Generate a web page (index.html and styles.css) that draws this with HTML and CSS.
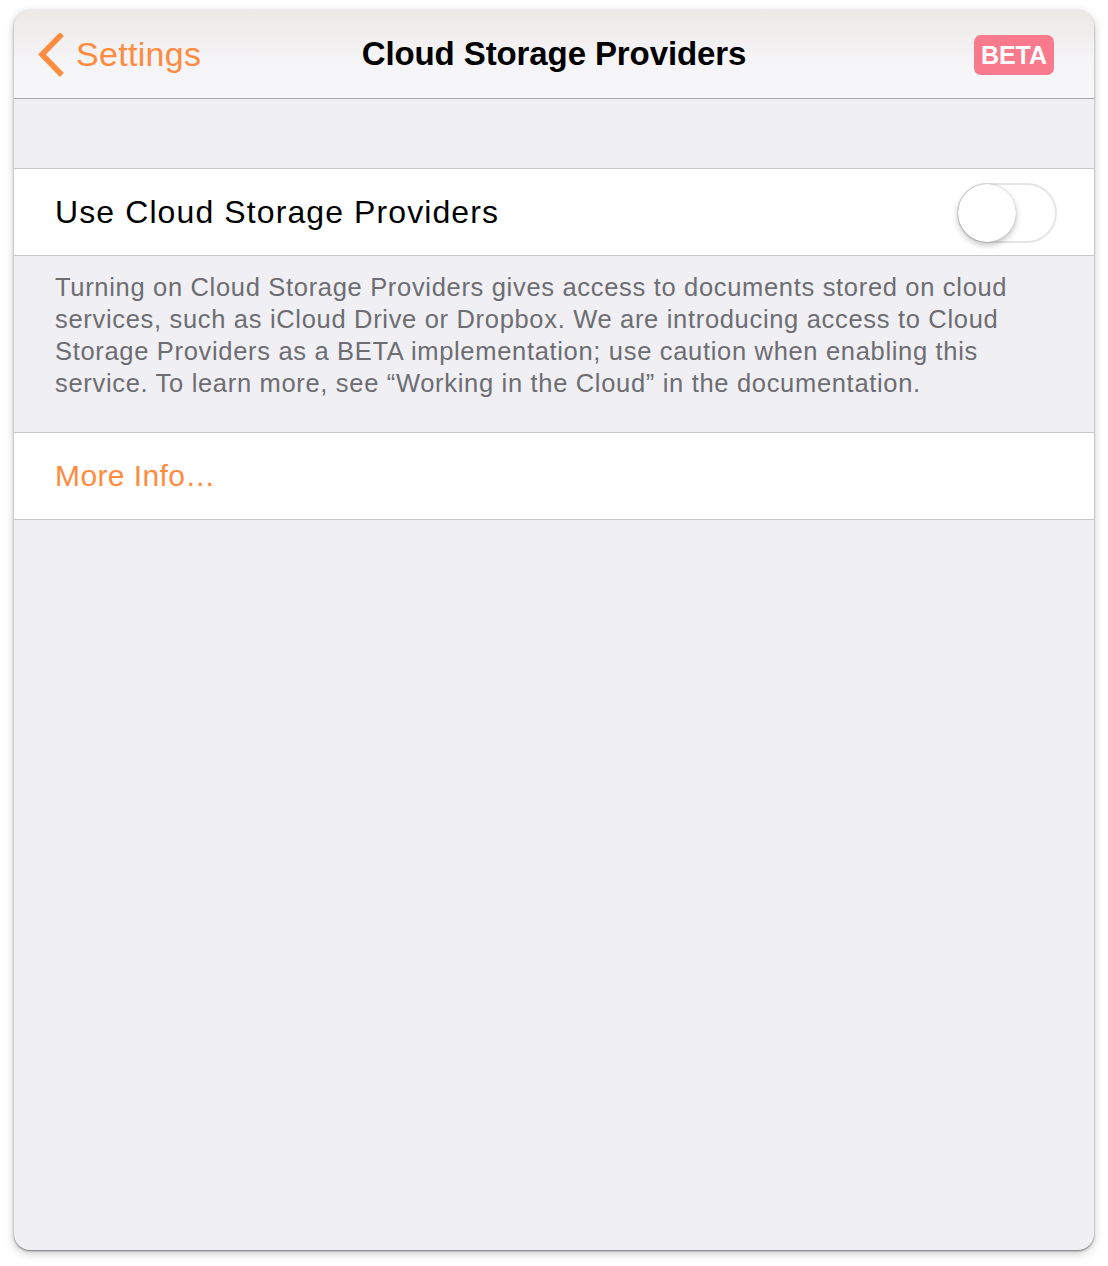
FILE: index.html
```html
<!DOCTYPE html>
<html>
<head>
<meta charset="utf-8">
<link rel="stylesheet" href="styles.css">
</head>
<body>
<div class="window">
  <header class="navbar">
    <div class="back">
      <svg class="chevron" width="30" height="44" viewBox="0 0 30 44"><polyline points="24,3 6,21.5 24,40" fill="none" stroke="#ff8b3f" stroke-width="5.5" stroke-linecap="square"/></svg>
      <span class="back-label">Settings</span>
    </div>
    <div class="title">Cloud Storage Providers</div>
    <div class="badge">BETA</div>
  </header>
  <div class="spacer"></div>
  <div class="cell">
    <span class="cell-label">Use Cloud Storage Providers</span>
    <div class="switch"><div class="knob"></div></div>
  </div>
  <p class="footer">Turning on Cloud Storage Providers gives access to documents stored on cloud services, such as iCloud Drive or Dropbox. We are introducing access to Cloud Storage Providers as a BETA implementation; use caution when enabling this service. To learn more, see “Working in the Cloud” in the documentation.</p>
  <div class="cell link-cell">
    <span class="link">More Info…</span>
  </div>
</div>
</body>
</html>
```

FILE: styles.css
```css
html, body {
  margin: 0;
  padding: 0;
  background: #ffffff;
}
body {
  width: 1108px;
  height: 1266px;
  font-family: "Liberation Sans", Arial, sans-serif;
  overflow: hidden;
}
.window {
  margin: 10px 0 0 14px;
  width: 1080px;
  height: 1240px;
  border-radius: 16px;
  background: #efeff4;
  overflow: hidden;
  box-shadow: 0 1px 2px rgba(0,0,0,0.45), 0 3px 10px rgba(0,0,0,0.22);
  display: flex;
  flex-direction: column;
}
.navbar {
  height: 88px;
  flex: none;
  background: linear-gradient(#ece8e5, #f5f4f6 55%, #f7f7f9);
  border-bottom: 1px solid #a9a9ab;
  display: flex;
  align-items: center;
  position: relative;
  box-sizing: content-box;
}
.back {
  display: flex;
  align-items: center;
  margin-left: 22px;
  gap: 10px;
}
.chevron {
  display: block;
  margin-top: 1px;
}
.back-label {
  color: #ff8b3f;
  font-size: 34px;
  letter-spacing: 0.3px;
}
.title {
  position: absolute;
  left: 0;
  right: 0;
  text-align: center;
  font-size: 33px;
  font-weight: bold;
  color: #000;
  letter-spacing: -0.1px;
  pointer-events: none;
}
.badge {
  margin-left: auto;
  margin-right: 40px;
  background: #f97a8c;
  color: #fff;
  font-weight: bold;
  font-size: 25px;
  border-radius: 7px;
  width: 80px;
  height: 40px;
  display: flex;
  align-items: center;
  justify-content: center;
  margin-top: 2px;
}
.spacer {
  height: 69px;
  flex: none;
  border-bottom: 1px solid #c8c7cc;
}
.cell {
  height: 86px;
  flex: none;
  background: #fff;
  border-bottom: 1px solid #c8c7cc;
  display: flex;
  align-items: center;
  padding: 0 37px 0 41px;
}
.cell-label {
  font-size: 32px;
  color: #000;
  letter-spacing: 1.1px;
}
.switch {
  margin-left: auto;
  width: 96px;
  height: 56px;
  border: 2px solid #e5e5e5;
  border-radius: 30px;
  position: relative;
  margin-top: 1px;
}
.knob {
  position: absolute;
  left: -1px;
  top: -1px;
  width: 58px;
  height: 58px;
  border-radius: 50%;
  background: #fff;
  box-shadow: 0 3px 6px rgba(0,0,0,0.25), 0 0 1px rgba(0,0,0,0.35);
}
.footer {
  margin: 0;
  padding: 15px 56px 33px 41px;
  font-size: 25.5px;
  line-height: 32px;
  color: #6d6d72;
  letter-spacing: 0.68px;
  border-bottom: 1px solid #c8c7cc;
  flex: none;
}
.link-cell {
  height: 86px;
}
.link {
  color: #ff8b3f;
  font-size: 30px;
  letter-spacing: 0.4px;
}
```
